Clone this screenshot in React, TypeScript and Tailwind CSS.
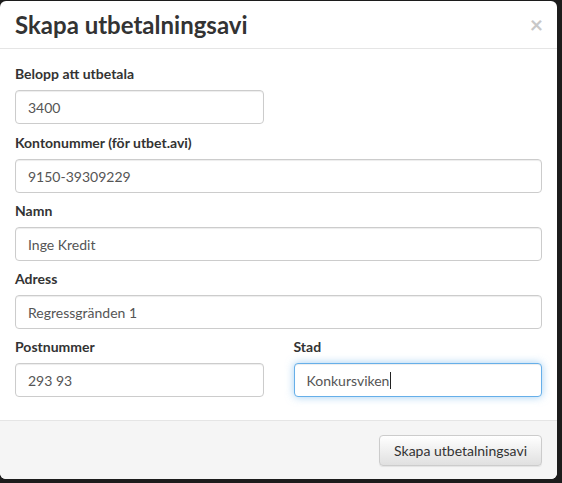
import React from "react";

function Field({ label, value, focused, mb = "mb-[8px]" }: { label: string; value: string; focused?: boolean; mb?: string }) {
  return (
    <div className={mb}>
      <div className="mb-[6px] text-[14px] font-bold leading-5 text-[#333]">{label}</div>
      <div
        className={
          focused
            ? "flex h-[34px] items-center rounded-[4px] border border-[#66afe9] bg-white px-[12px] text-[14px] text-[#555] shadow-[0_0_8px_rgba(102,175,233,0.6),inset_0_1px_1px_rgba(0,0,0,0.075)]"
            : "flex h-[34px] items-center rounded-[4px] border border-[#ccc] bg-white px-[12px] text-[14px] text-[#555] shadow-[inset_0_1px_1px_rgba(0,0,0,0.075)]"
        }
      >
        <span>{value}</span>
        {focused && <span className="ml-px inline-block h-[17px] w-px bg-[#222]" />}
      </div>
    </div>
  );
}

export default function App() {
  return (
    <div
      className="h-[483px] w-[562px] overflow-hidden bg-[#1c1c1c]"
      style={{ fontFamily: "Lato, 'Open Sans', sans-serif" }}
    >
      <div className="mt-px flex h-[478px] w-[557px] flex-col overflow-hidden rounded-[6px] bg-white">
        <div className="flex h-[47px] shrink-0 items-center justify-between px-[15px]">
          <div className="text-[24px] font-bold leading-none text-[#333]">Skapa utbetalningsavi</div>
          <div className="mr-[-1px] text-[23px] font-bold leading-none text-[#c8c8c8]">×</div>
        </div>
        <div className="h-px shrink-0 bg-[#e5e5e5]" />
        <div className="shrink-0 px-[15px] pb-[15px] pt-[15px]">
          <div className="grid grid-cols-2 gap-x-[30px]">
            <Field label="Belopp att utbetala" value="3400" mb="mb-[9px]" />
            <div />
          </div>
          <Field label="Kontonummer (för utbet.avi)" value="9150-39309229" />
          <Field label="Namn" value="Inge Kredit" />
          <Field label="Adress" value="Regressgränden 1" />
          <div className="grid grid-cols-2 gap-x-[30px]">
            <Field label="Postnummer" value="293 93" />
            <Field label="Stad" value="Konkursviken" focused />
          </div>
        </div>
        <div className="flex flex-1 justify-end border-t border-[#e5e5e5] bg-[#f5f5f5] px-[15px] pt-[14px]">
          <button className="h-[31px] rounded-[4px] border border-[#ccc] bg-gradient-to-b from-white to-[#e0e0e0] px-[14px] text-[14px] text-[#333] shadow-[inset_0_1px_0_rgba(255,255,255,0.15),0_1px_1px_rgba(0,0,0,0.075)]">
            Skapa utbetalningsavi
          </button>
        </div>
      </div>
    </div>
  );
}
